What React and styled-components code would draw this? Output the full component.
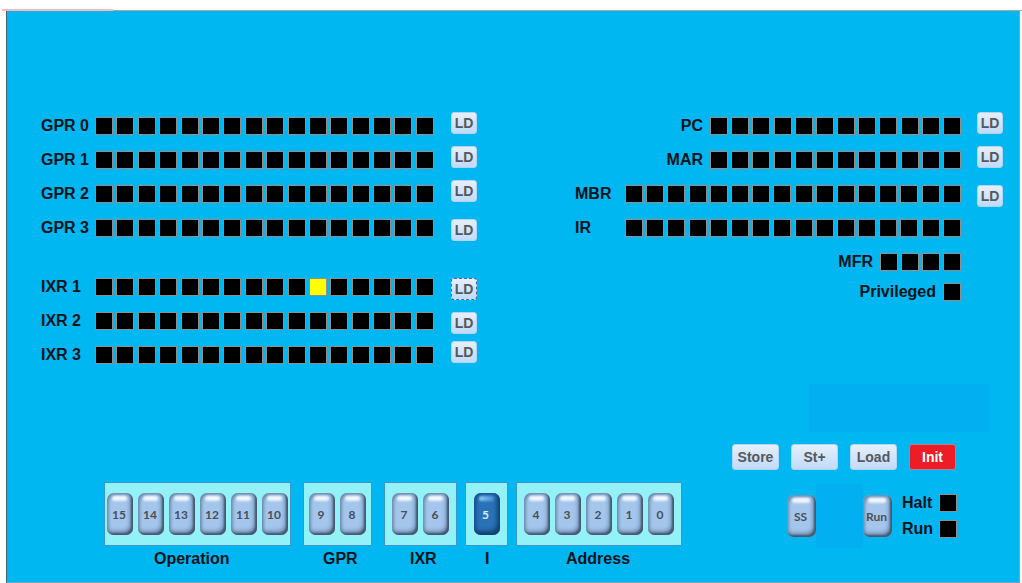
import React, { useState } from "react";
import styled, { createGlobalStyle, css } from "styled-components";

const GlobalStyle = createGlobalStyle`
  *, *::before, *::after { box-sizing: border-box; }
  body {
    margin: 0;
    background: #ffffff;
    color: #03131b;
    font-family: "Liberation Sans", Arial, sans-serif;
  }
  button { font-family: inherit; padding: 0; cursor: pointer; }
`;

const TopRule = styled.div`
  display: flex;
  align-items: flex-end;
  height: 11px;
  padding-left: 2px;
`;

const PinkRule = styled.div`
  width: 111px;
  height: 2px;
  background: #fcb9c0;
`;

const GrayRule = styled.div`
  flex: 1;
  height: 1px;
  background: #a3a5a7;
`;

const Panel = styled.main`
  display: flex;
  flex-direction: column;
  min-height: calc(100vh - 11px);
  margin: 0 2px 0 6px;
  padding: 101px 0 12px;
  background: #01b7f2;
  border: 1px solid #6fa9bd;
  border-top: 0;
  border-left-color: #3f6370;
`;

const Registers = styled.section`
  display: flex;
  justify-content: space-between;
  padding: 0 16px 0 34px;
`;

const Bank = styled.div`
  display: flex;
  flex-direction: column;
`;

const Row = styled.div`
  display: flex;
  align-items: flex-start;
  justify-content: flex-end;
  height: ${(p) => (p.$short ? 30 : 34)}px;
  margin-top: ${(p) => (p.$spaced ? 25 : 0)}px;
`;

const Name = styled.span`
  width: ${(p) => (p.$width ? `${p.$width}px` : "auto")};
  margin: 5px ${(p) => (p.$width ? 0 : 7)}px 0 0;
  font-size: 16px;
  font-weight: 700;
  line-height: 18px;
  white-space: nowrap;
`;

const Lights = styled.div`
  display: flex;
  justify-content: space-between;
  width: ${(p) => p.$width}px;
  margin-top: 5px;
`;

const Light = styled.span`
  flex: none;
  width: 18px;
  height: 18px;
  background: ${(p) => (p.$on ? "#ffff00" : "#000000")};
  border: 1px solid #8f8f90;
`;

const LoadCell = styled.div`
  width: 26px;
  margin: ${(p) => (p.$low ? 5 : 0)}px 0 0 ${(p) => p.$gap}px;
`;

const SoftButton = styled.button`
  display: block;
  width: ${(p) => (p.$small ? 26 : 47)}px;
  height: ${(p) => (p.$small ? 22 : 26)}px;
  color: #55585c;
  background: linear-gradient(#e6effc, #bfdbfa);
  border: 1px solid #b3d3f2;
  border-radius: 3px;
  font-size: 14px;
  font-weight: 700;
  line-height: 16px;
  ${(p) =>
    p.$danger &&
    css`
      color: #ffffff;
      background: #ee1c25;
      border-color: #b57f9c;
    `}
  ${(p) =>
    p.$focused &&
    css`
      border: 1px dashed #4c6a88;
    `}
`;

const Lower = styled.section`
  display: flex;
  justify-content: space-between;
  align-items: flex-start;
  margin-top: 9px;
  padding: 0 30px 0 97px;
`;

const KeyBank = styled.div`
  display: flex;
  padding-top: 98px;
`;

const KeyGroup = styled.div`
  margin-left: ${(p) => p.$gap}px;
`;

const KeyTray = styled.div`
  display: flex;
  justify-content: center;
  align-items: center;
  gap: 5px;
  width: ${(p) => p.$width}px;
  height: 64px;
  background: #93f2f8;
  border: 1px solid #3a96cd;
`;

const Caption = styled.div`
  margin-top: 4px;
  padding-left: ${(p) => p.$inset}px;
  font-size: 16px;
  font-weight: 700;
  line-height: 18px;
`;

const Key = styled.button`
  display: flex;
  position: relative;
  flex: none;
  align-items: center;
  justify-content: center;
  width: ${(p) => (p.$wide ? 29 : 26)}px;
  height: 42px;
  padding: 2px 2px 0 0;
  color: ${(p) => (p.$down ? "#dcebf8" : "#4a4f57")};
  background: ${(p) => (p.$down ? "#2a72b8" : "#a4c6ec")};
  border: 0;
  border-radius: 7px;
  box-shadow: ${(p) =>
    p.$down
      ? "inset -3px -4px 4px #123f70, inset 3px 2px 3px #1c5797"
      : "inset -2px -2px 2px #45586e, inset -3px -4px 4px #6d8aac, inset 2px 2px 3px #6f8dae"};
  font-family: Lato, "Liberation Sans", sans-serif;
  font-size: 12px;
  font-weight: 700;
  line-height: 16px;

  &::before {
    content: "";
    position: absolute;
    top: 3px;
    left: 5px;
    right: 6px;
    height: 5px;
    border-radius: 3px;
    background: ${(p) =>
      p.$down
        ? "linear-gradient(90deg, #8fd0f8, #4590d2)"
        : "linear-gradient(#ffffff, #e3effc)"};
    filter: blur(1px);
  }
`;

const Controls = styled.div`
  display: flex;
  flex-direction: column;
  align-items: flex-end;
`;

const Readout = styled.div`
  width: ${(p) => (p.$tall ? 47 : 180)}px;
  height: ${(p) => (p.$tall ? 64 : 48)}px;
  background: #02b0f2;
`;

const Actions = styled.div`
  display: flex;
  gap: 12px;
  margin: 12px 33px 14px 0;
`;

const RunControls = styled.div`
  display: flex;
  align-items: center;
  margin-right: 32px;
`;

const StatusList = styled.div`
  display: flex;
  flex-direction: column;
  gap: 8px;
  margin-left: 10px;
`;

const Status = styled.div`
  display: flex;
  justify-content: space-between;
  width: 55px;
  font-size: 16px;
  font-weight: 700;
  line-height: 18px;
`;

const leftRegisters = [
  { name: "GPR 0" },
  { name: "GPR 1" },
  { name: "GPR 2" },
  { name: "GPR 3", low: true },
  { name: "IXR 1", low: true, spaced: true, lit: 10, focused: true },
  { name: "IXR 2", low: true },
  { name: "IXR 3" },
];

const rightRegisters = [
  { name: "PC", bits: 12, width: 251, load: true },
  { name: "MAR", bits: 12, width: 251, load: true },
  { name: "MBR", bits: 16, width: 336, load: true, low: true, nameWidth: 50 },
  { name: "IR", bits: 16, width: 336, nameWidth: 50 },
  { name: "MFR", bits: 4, width: 81, short: true },
  { name: "Privileged", bits: 1, width: 18 },
];

const keyGroups = [
  { name: "Operation", keys: [15, 14, 13, 12, 11, 10], width: 187, gap: 0, inset: 50 },
  { name: "GPR", keys: [9, 8], width: 69, gap: 12, inset: 20 },
  { name: "IXR", keys: [7, 6], width: 73, gap: 12, inset: 26 },
  { name: "I", keys: [5], width: 43, gap: 8, inset: 20 },
  { name: "Address", keys: [4, 3, 2, 1, 0], width: 166, gap: 8, inset: 50 },
];

function LightStrip({ bits, width, lit }) {
  return (
    <Lights $width={width}>
      {Array.from({ length: bits }, (_, i) => (
        <Light key={i} $on={i === lit} />
      ))}
    </Lights>
  );
}

export default function App() {
  const [down, setDown] = useState([5]);
  const toggle = (bit) =>
    setDown((now) => (now.includes(bit) ? now.filter((b) => b !== bit) : [...now, bit]));

  return (
    <>
      <GlobalStyle />
      <TopRule>
        <PinkRule />
        <GrayRule />
      </TopRule>
      <Panel>
        <Registers>
          <Bank>
            {leftRegisters.map((r) => (
              <Row key={r.name} $spaced={r.spaced}>
                <Name $width={54}>{r.name}</Name>
                <LightStrip bits={16} width={339} lit={r.lit} />
                <LoadCell $gap={17} $low={r.low}>
                  <SoftButton type="button" $small $focused={r.focused}>LD</SoftButton>
                </LoadCell>
              </Row>
            ))}
          </Bank>
          <Bank>
            {rightRegisters.map((r) => (
              <Row key={r.name} $short={r.short}>
                <Name $width={r.nameWidth}>{r.name}</Name>
                <LightStrip bits={r.bits} width={r.width} />
                <LoadCell $gap={16} $low={r.low}>
                  {r.load && <SoftButton type="button" $small>LD</SoftButton>}
                </LoadCell>
              </Row>
            ))}
          </Bank>
        </Registers>
        <Lower>
          <KeyBank>
            {keyGroups.map((g) => (
              <KeyGroup key={g.name} $gap={g.gap}>
                <KeyTray $width={g.width}>
                  {g.keys.map((bit) => (
                    <Key
                      key={bit}
                      type="button"
                      aria-pressed={down.includes(bit)}
                      $down={down.includes(bit)}
                      onClick={() => toggle(bit)}
                    >
                      {bit}
                    </Key>
                  ))}
                </KeyTray>
                <Caption $inset={g.inset}>{g.name}</Caption>
              </KeyGroup>
            ))}
          </KeyBank>
          <Controls>
            <Readout />
            <Actions>
              <SoftButton type="button">Store</SoftButton>
              <SoftButton type="button">St+</SoftButton>
              <SoftButton type="button">Load</SoftButton>
              <SoftButton type="button" $danger>Init</SoftButton>
            </Actions>
            <RunControls>
              <Key type="button" $wide>SS</Key>
              <Readout $tall />
              <Key type="button" $wide>Run</Key>
              <StatusList>
                <Status>Halt<Light /></Status>
                <Status>Run<Light /></Status>
              </StatusList>
            </RunControls>
          </Controls>
        </Lower>
      </Panel>
    </>
  );
}
